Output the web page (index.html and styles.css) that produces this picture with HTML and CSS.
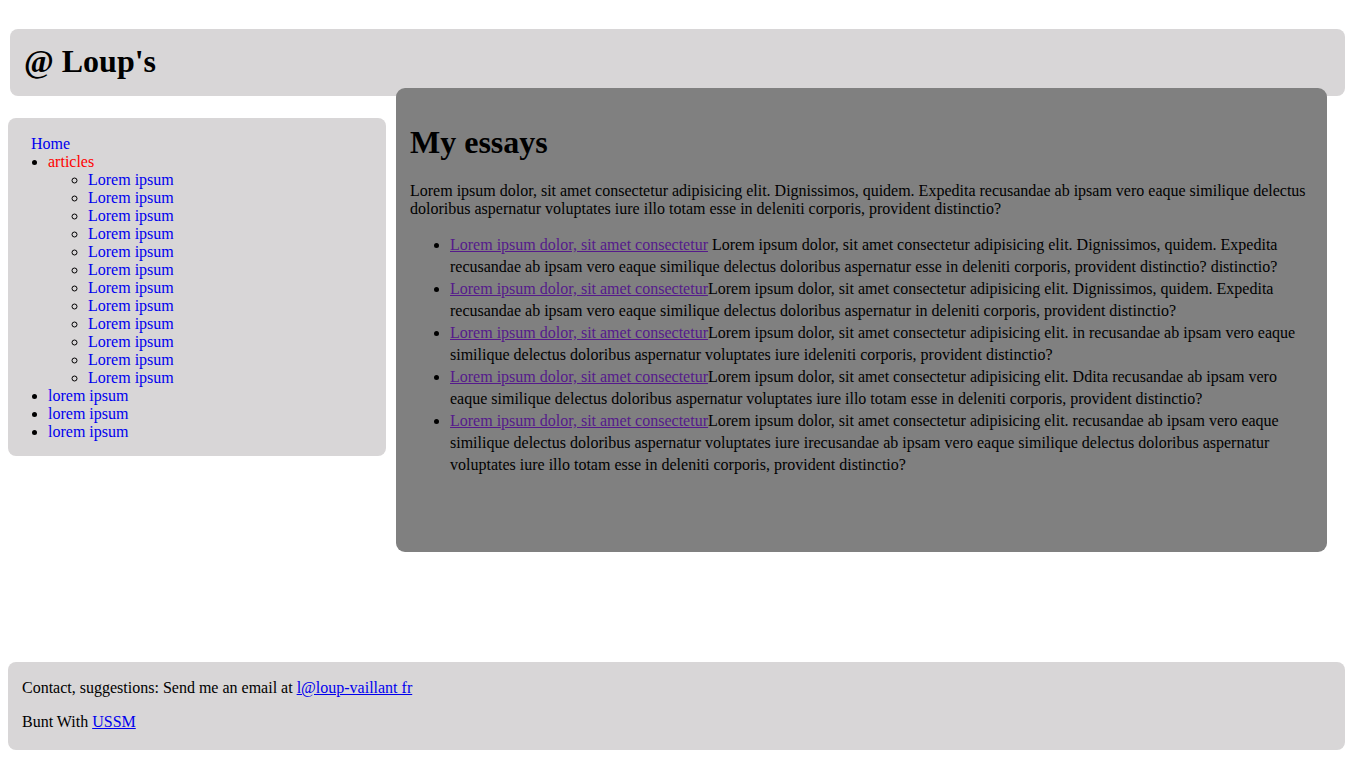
FILE: index.html
```html
<!DOCTYPE html>
<html lang="en">
<head>
<meta charset="utf-8">
<title>Loup's</title>
<link rel="stylesheet" href="styles.css">
</head>
<body>
<header class="site-header">
  <h1 class="site-title">@ Loup's</h1>
</header>
<div class="layout">
  <nav class="sidebar">
    <a class="nav-home" href="#">Home</a>
    <ul class="nav-list">
      <li><a class="nav-current" href="#">articles</a>
        <ul class="nav-sub">
          <li><a href="#">Lorem ipsum</a></li>
          <li><a href="#">Lorem ipsum</a></li>
          <li><a href="#">Lorem ipsum</a></li>
          <li><a href="#">Lorem ipsum</a></li>
          <li><a href="#">Lorem ipsum</a></li>
          <li><a href="#">Lorem ipsum</a></li>
          <li><a href="#">Lorem ipsum</a></li>
          <li><a href="#">Lorem ipsum</a></li>
          <li><a href="#">Lorem ipsum</a></li>
          <li><a href="#">Lorem ipsum</a></li>
          <li><a href="#">Lorem ipsum</a></li>
          <li><a href="#">Lorem ipsum</a></li>
        </ul>
      </li>
      <li><a href="#">lorem ipsum</a></li>
      <li><a href="#">lorem ipsum</a></li>
      <li><a href="#">lorem ipsum</a></li>
    </ul>
  </nav>
  <main class="content">
    <h1 class="content-title">My essays</h1>
    <p class="intro">Lorem ipsum dolor, sit amet consectetur adipisicing elit. Dignissimos, quidem. Expedita recusandae ab ipsam vero eaque similique delectus doloribus aspernatur voluptates iure illo totam esse in deleniti corporis, provident distinctio?</p>
    <ul class="essays">
      <li><a class="essay-link" href="#">Lorem ipsum dolor, sit amet consectetur</a> Lorem ipsum dolor, sit amet consectetur adipisicing elit. Dignissimos, quidem. Expedita recusandae ab ipsam vero eaque similique delectus doloribus aspernatur esse in deleniti corporis, provident distinctio? distinctio?</li>
      <li><a class="essay-link" href="#">Lorem ipsum dolor, sit amet consectetur</a>Lorem ipsum dolor, sit amet consectetur adipisicing elit. Dignissimos, quidem. Expedita recusandae ab ipsam vero eaque similique delectus doloribus aspernatur in deleniti corporis, provident distinctio?</li>
      <li><a class="essay-link" href="#">Lorem ipsum dolor, sit amet consectetur</a>Lorem ipsum dolor, sit amet consectetur adipisicing elit. in recusandae ab ipsam vero eaque similique delectus doloribus aspernatur voluptates iure ideleniti corporis, provident distinctio?</li>
      <li><a class="essay-link" href="#">Lorem ipsum dolor, sit amet consectetur</a>Lorem ipsum dolor, sit amet consectetur adipisicing elit. Ddita recusandae ab ipsam vero eaque similique delectus doloribus aspernatur voluptates iure illo totam esse in deleniti corporis, provident distinctio?</li>
      <li><a class="essay-link" href="#">Lorem ipsum dolor, sit amet consectetur</a>Lorem ipsum dolor, sit amet consectetur adipisicing elit. recusandae ab ipsam vero eaque similique delectus doloribus aspernatur voluptates iure irecusandae ab ipsam vero eaque similique delectus doloribus aspernatur voluptates iure illo totam esse in deleniti corporis, provident distinctio?</li>
    </ul>
  </main>
</div>
<footer class="site-footer">
  <p>Contact, suggestions: Send me an email at <a href="#">l@loup-vaillant fr</a></p>
  <p>Bunt With <a href="#">USSM</a></p>
</footer>
</body>
</html>
```

FILE: styles.css
```css
html, body {
  height: 100%;
}
body {
  margin: 8px;
  min-height: calc(100vh - 16px);
  height: auto;
  box-sizing: border-box;
  display: flex;
  flex-direction: column;
  font-family: "Liberation Serif", "Times New Roman", serif;
  font-size: 16px;
  color: #000;
  background: #fff;
}
.site-header {
  margin: 21px 13px 0 2px;
  padding: 14px 14px 16px;
  background: #d8d6d7;
  border-radius: 8px;
}
.site-title {
  margin: 0;
  font-size: 32px;
  font-weight: bold;
  line-height: 37px;
}
.layout {
  display: flex;
  align-items: flex-start;
  gap: 10px;
  margin-top: 22px;
  margin-right: 31px;
}
.sidebar {
  flex: 0 0 378px;
  box-sizing: border-box;
  padding: 17px 0 15px;
  background: #d8d6d7;
  border-radius: 8px;
  line-height: 18px;
}
.sidebar a {
  color: #0000ee;
  text-decoration: none;
}
.nav-home {
  display: block;
  margin-left: 23px;
}
.sidebar a.nav-current {
  color: #ff0000;
}
.nav-list {
  margin: 0;
  padding-left: 40px;
  list-style: disc;
}
.nav-sub {
  margin: 0;
  padding-left: 40px;
  list-style: circle;
}
.content {
  flex: 1 1 auto;
  margin-top: -30px;
  height: 464px;
  box-sizing: border-box;
  padding: 14px;
  background: #808080;
  border-radius: 9px;
}
.content-title {
  margin: 22px 0 21px;
  font-size: 32px;
  line-height: 37px;
}
.intro {
  margin: 0 0 16px;
  line-height: 18px;
}
.essays {
  margin: 0;
  padding-left: 40px;
  line-height: 22px;
}
.essay-link {
  color: #551a8b;
  text-decoration: underline;
}
.site-footer {
  margin: auto 13px 0 0;
  padding: 1px 14px 3px;
  background: #d8d6d7;
  border-radius: 8px;
  line-height: 18px;
}
.site-footer p {
  margin: 16px 0;
}
.site-footer a {
  color: #0000ee;
  text-decoration: underline;
}
```
